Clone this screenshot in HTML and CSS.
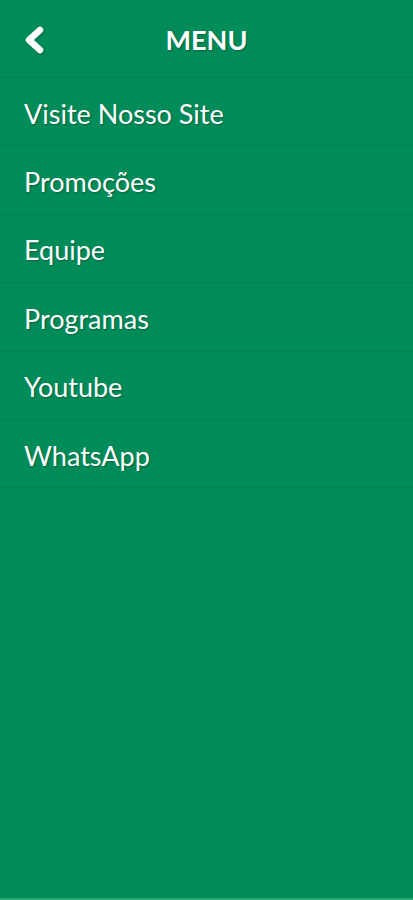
FILE: index.html
```html
<!DOCTYPE html>
<html lang="pt">

<head>
    <meta charset="UTF-8">
    <meta name="viewport" content="width=device-width, initial-scale=1.0">
    <title>Menu</title>
    <link rel="stylesheet" href="styles.css">
</head>

<body>
    <div id="app">
        <header id="topBar">
            <a href="#" class="back" aria-label="Voltar">
                <svg width="22" height="28" viewBox="0 0 22 28">
                    <polyline points="17,4 6,14 17,24" fill="none" stroke="#fff" stroke-width="6.5"
                        stroke-linecap="round" stroke-linejoin="round" />
                </svg>
            </a>
            <div class="title">MENU</div>
        </header>

        <nav id="menu">
            <ul>
                <li><a href="#">Visite Nosso Site</a></li>
                <li><a href="#">Promoções</a></li>
                <li><a href="#">Equipe</a></li>
                <li><a href="#">Programas</a></li>
                <li><a href="#">Youtube</a></li>
                <li><a href="#">WhatsApp</a></li>
            </ul>
        </nav>
    </div>
</body>

</html>
```

FILE: styles.css
```css
body {
    margin: 0;
    background: #008c59;
    color: white;
    font-family: 'Lato', 'Open Sans', sans-serif;
}

#app {
    height: 898px;
    border-bottom: 2px solid #2aa673;
    display: flex;
    flex-direction: column;
}

#topBar {
    height: 78px;
    box-sizing: border-box;
    border-bottom: 1px solid rgba(0, 0, 0, 0.06);
    display: flex;
    align-items: center;
    position: relative;
}

#topBar .back {
    display: flex;
    margin-left: 23px;
    margin-top: 2px;
    filter: drop-shadow(1px 1px 1px rgba(0, 0, 0, 0.25));
}

#topBar .title {
    position: absolute;
    left: 0;
    right: 0;
    padding-top: 2px;
    text-align: center;
    font-size: 27px;
    font-weight: bold;
    text-shadow: 1px 1px 2px rgba(0, 0, 0, 0.3);
    pointer-events: none;
}

#menu ul {
    list-style-type: none;
    margin: 0;
    padding: 0;
}

#menu li {
    height: 68.4px;
    box-sizing: border-box;
    border-bottom: 1px solid rgba(0, 0, 0, 0.06);
}

#menu li a {
    display: flex;
    align-items: center;
    box-sizing: border-box;
    height: 100%;
    padding: 3px 0 0 24px;
    color: white;
    text-decoration: none;
    font-size: 27px;
    text-shadow: 1px 1px 2px rgba(0, 0, 0, 0.3);
}
```
